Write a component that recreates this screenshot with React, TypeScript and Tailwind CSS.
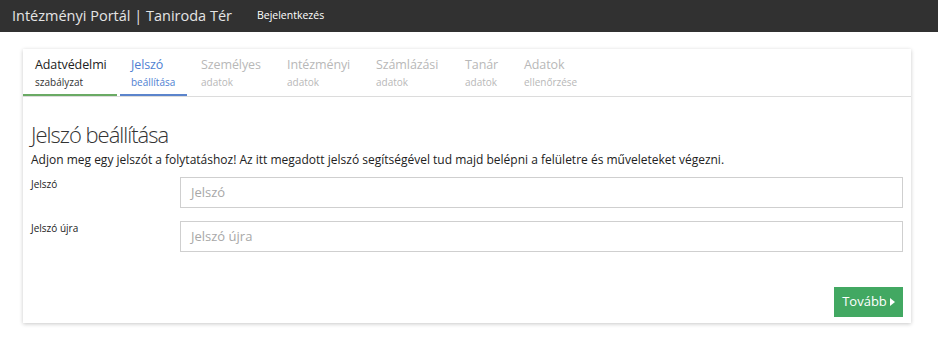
import { ReactNode } from "react";

type Step = { title: string; sub: string; state: "done" | "current" | "todo"; width: string };

const STEPS: Step[] = [
  { title: "Adatvédelmi", sub: "szabályzat", state: "done", width: "w-[94px] pl-[12px]" },
  { title: "Jelszó", sub: "beállítása", state: "current", width: "w-[67px] pl-[11px]" },
  { title: "Személyes", sub: "adatok", state: "todo", width: "w-[83px] pl-[11px]" },
  { title: "Intézményi", sub: "adatok", state: "todo", width: "w-[86px] pl-[11px]" },
  { title: "Számlázási", sub: "adatok", state: "todo", width: "w-[86px] pl-[11px]" },
  { title: "Tanár", sub: "adatok", state: "todo", width: "w-[56px] pl-[11px]" },
  { title: "Adatok", sub: "ellenőrzése", state: "todo", width: "w-[80px] pl-[11px]" },
];

function Tab({ step }: { step: Step }) {
  const border =
    step.state === "done"
      ? "border-[#6aaa64]"
      : step.state === "current"
        ? "border-[#5b84cc]"
        : "border-transparent";
  const title =
    step.state === "done" ? "text-[#222]" : step.state === "current" ? "text-[#4f7fd2]" : "text-[#b8b8b8]";
  const sub =
    step.state === "done" ? "text-[#333]" : step.state === "current" ? "text-[#4f7fd2]" : "text-[#b8b8b8]";
  return (
    <div className={`${step.width} pt-[8px] h-[47px] border-b-[2px] ${border}`}>
      <div className={`text-[12.5px] leading-[16px] tracking-[-0.1px] ${title}`}>{step.title}</div>
      <div className={`text-[10px] leading-[14px] mt-[2px] ${sub}`}>{step.sub}</div>
    </div>
  );
}

function Field({ label, placeholder }: { label: string; placeholder: string }): ReactNode {
  return (
    <div className="flex">
      <label className="w-[149px] text-[10px] text-[#222]">{label}</label>
      <div className="w-[723px] h-[31px] border border-[#cfcfcf] flex items-center pl-[10px] text-[13px] text-[#a8a8a8]">
        {placeholder}
      </div>
    </div>
  );
}

export default function App() {
  return (
    <div className="w-[938px] h-[354px] bg-white" style={{ fontFamily: '"Open Sans", sans-serif' }}>
      <div className="h-[32px] bg-[#313131] flex items-center">
        <span className="ml-[12px] text-[14.5px] text-[#e4e4e4]">Intézményi Portál | Taniroda Tér</span>
        <span className="ml-[25px] text-[10.5px] text-white">Bejelentkezés</span>
      </div>

      <div className="ml-[23px] mt-[17px] w-[888px] h-[274px] bg-white shadow-[0_1px_4px_rgba(0,0,0,0.22)]">
        <div className="flex gap-[3px] border-b border-[#dcdcdc] h-[48px]">
          {STEPS.map((s) => (
            <Tab key={s.title} step={s} />
          ))}
        </div>

        <div className="px-[8px]">
          <h1 className="mt-[23px] text-[22px] tracking-[-1px] font-light leading-[28px] text-[#333]">Jelszó beállítása</h1>
          <p className="mt-[3px] text-[12px] leading-[18px] text-[#222]">
            Adjon meg egy jelszót a folytatáshoz! Az itt megadott jelszó segítségével tud majd belépni a felületre és műveleteket végezni.
          </p>
          <div className="mt-[8px] flex flex-col gap-[13px]">
            <Field label="Jelszó" placeholder="Jelszó" />
            <Field label="Jelszó újra" placeholder="Jelszó újra" />
          </div>
          <div className="flex justify-end mt-[35px]">
            <button className="w-[69px] h-[30px] bg-[#42a862] text-white text-[13px] flex items-center justify-center gap-[3px]">
              Tovább
              <svg width="5" height="8" viewBox="0 0 5 8">
                <path d="M0 0 L5 4 L0 8 Z" fill="white" />
              </svg>
            </button>
          </div>
        </div>
      </div>
    </div>
  );
}
